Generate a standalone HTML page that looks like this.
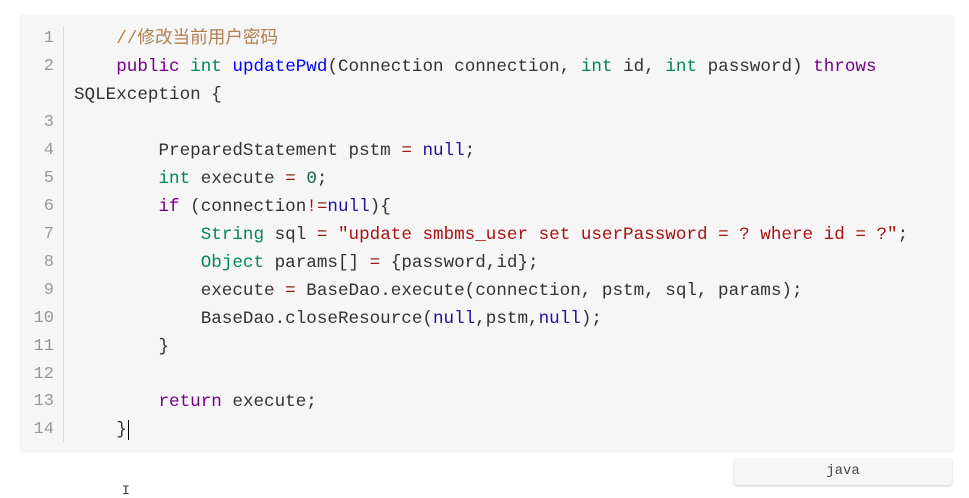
<!DOCTYPE html>
<html><head><meta charset="utf-8"><style>
body{margin:0;background:#fff;width:969px;height:497px;overflow:hidden;position:relative;font-family:"Liberation Mono","Noto Sans CJK SC",monospace;}
.box{position:absolute;left:20px;top:15px;width:934px;height:437px;background:#f6f6f7;border-radius:4px;box-shadow:0 0 1px #ddd;}
.gut{position:absolute;left:63px;top:26px;height:416px;border-left:1px solid #ddd;}
.ln{position:absolute;left:20px;width:34px;text-align:right;color:#999;font-size:17px;line-height:28px;}
.l{position:absolute;left:74px;white-space:pre;font-size:17.6px;color:#333;line-height:28px;}
.c{color:#b08050}.k{color:#770088}.t{color:#008855}.f{color:#0000ff}.s{color:#aa1111}.n{color:#221199}.o{color:#981a1a}.num{color:#116644}
.btn{position:absolute;left:734px;top:458px;width:218px;height:27px;background:#f6f6f7;border-radius:3px;box-shadow:0 1px 2px #ccc;text-align:center;line-height:27px;font-size:14px;color:#444;}
</style></head><body>
<div class="box"></div><div class="gut"></div>
<div class="ln" style="top:25px">1</div>
<div class="ln" style="top:53px">2</div>
<div class="ln" style="top:109px">3</div>
<div class="ln" style="top:137px">4</div>
<div class="ln" style="top:165px">5</div>
<div class="ln" style="top:193px">6</div>
<div class="ln" style="top:221px">7</div>
<div class="ln" style="top:249px">8</div>
<div class="ln" style="top:277px">9</div>
<div class="ln" style="top:305px">10</div>
<div class="ln" style="top:333px">11</div>
<div class="ln" style="top:361px">12</div>
<div class="ln" style="top:388px">13</div>
<div class="ln" style="top:416px">14</div>
<div class="l" style="top:25px">    <span class="c">//修改当前用户密码</span></div>
<div class="l" style="top:53px">    <span class="k">public</span> <span class="t">int</span> <span class="f">updatePwd</span>(Connection connection, <span class="t">int</span> id, <span class="t">int</span> password) <span class="k">throws</span></div>
<div class="l" style="top:81px">SQLException {</div>
<div class="l" style="top:137px">        PreparedStatement pstm <span class="o">=</span> <span class="n">null</span>;</div>
<div class="l" style="top:165px">        <span class="t">int</span> execute <span class="o">=</span> <span class="num">0</span>;</div>
<div class="l" style="top:193px">        <span class="k">if</span> (connection<span class="o">!=</span><span class="n">null</span>){</div>
<div class="l" style="top:221px">            <span class="t">String</span> sql <span class="o">=</span> <span class="s">"update smbms_user set userPassword = ? where id = ?"</span>;</div>
<div class="l" style="top:249px">            <span class="t">Object</span> params[] <span class="o">=</span> {password,id};</div>
<div class="l" style="top:277px">            execute <span class="o">=</span> BaseDao.execute(connection, pstm, sql, params);</div>
<div class="l" style="top:305px">            BaseDao.closeResource(<span class="n">null</span>,pstm,<span class="n">null</span>);</div>
<div class="l" style="top:333px">        }</div>
<div class="l" style="top:388px">        <span class="k">return</span> execute;</div>
<div class="l" style="top:416px">    }<span style="border-left:1px solid #000;margin-left:1px"></span></div>
<div class="btn">java</div>
<div style="position:absolute;left:122px;top:483px;font-size:13px;color:#333">I</div>
</body></html>
